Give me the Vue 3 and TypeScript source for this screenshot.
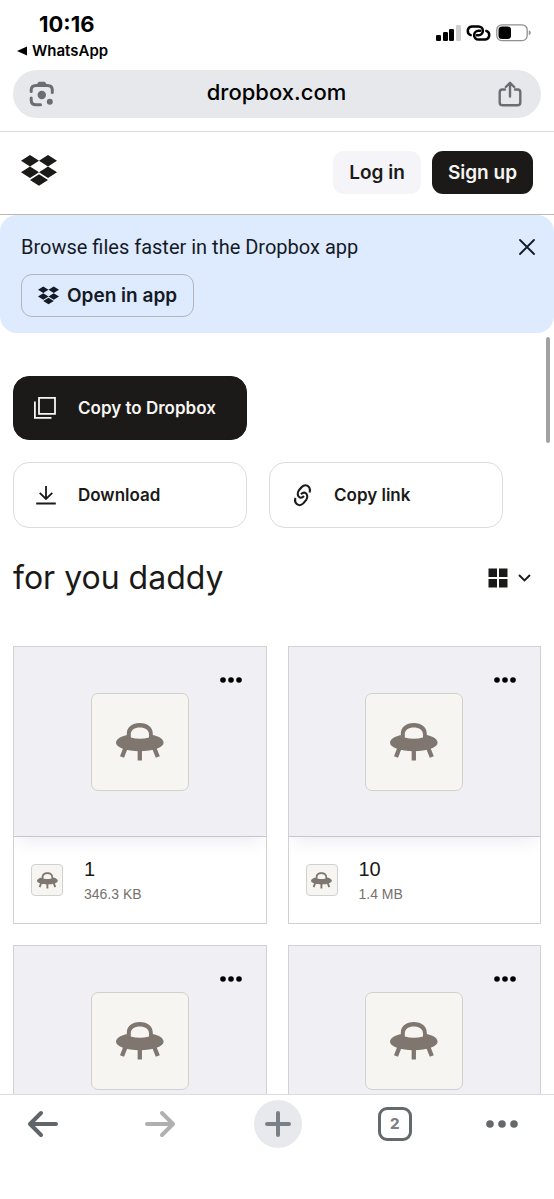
<script setup lang="ts">
interface FileItem {
  id: number
  name?: string
  size?: string
}

const files: FileItem[] = [
  { id: 1, name: '1', size: '346.3 KB' },
  { id: 2, name: '10', size: '1.4 MB' },
  { id: 3 },
  { id: 4 },
]
</script>

<template>
  <div class="screen">
    <svg class="defs" width="0" height="0" aria-hidden="true">
      <symbol id="ufo" viewBox="0 0 48 38">
        <path d="M10.8 15V11C10.8 4 16 0 23.8 0S36.8 4 36.8 11V15L33 15V11.5C33 6.5 29 4.4 23.8 4.4S14.8 6.500 14.800 11.500V14.500Q23.800 17 33 14.500L37 12C44 13.500 47.600 16.500 47.600 19.800C47.600 24.600 37 28.200 23.800 28.200S0 24.600 0 19.800C0 16.500 4 13.500 10.800 12Z" fill="#7f766f" />
        <path d="M9.500 25L6 34M38.200 25L41.800 34M23.800 26V37.500" stroke="#7f766f" stroke-width="4.300" />
      </symbol>
      <symbol id="dropbox" viewBox="0 0 36 31">
        <path d="M9 0l9 5.700-9 5.700-9-5.700zM27 0l9 5.700-9 5.700-9-5.700zM9 11.500l9 5.700-9 5.700-9-5.700zM27 11.500l9 5.700-9 5.700-9-5.700zM18 19.300l9 5.700-9 5.700-9-5.700z" fill="currentColor" />
      </symbol>
      <symbol id="loops" viewBox="0 0 24 15">
        <path d="M4.500 9.500A4.300 4.300 0 0 1 5.500 1.200H12A4.200 4.200 0 0 1 12 9.600H10.500M19.500 5.500A4.300 4.300 0 0 1 18.500 13.800H12A4.200 4.200 0 0 1 12 5.400H13.500" fill="none" stroke="currentColor" stroke-linecap="round" />
      </symbol>
    </svg>

    <div class="status">
      <div class="clock">
        <time>10:16</time>
        <a href="#" class="back-app"><svg width="10" height="10" viewBox="0 0 10 10"><path d="M0 5L10 .5v9z" fill="#000" /></svg>WhatsApp</a>
      </div>
      <div class="indicators">
        <svg width="25" height="16" viewBox="0 0 25 16">
          <rect x="0" y="10" width="5" height="6" rx="1.300" />
          <rect x="7" y="7" width="5" height="9" rx="1.300" />
          <rect x="13" y="4" width="5" height="12" rx="1.300" />
          <rect x="20" y="0" width="5" height="16" rx="1.300" fill="#cfcfcf" />
        </svg>
        <svg width="25" height="16" class="hotspot"><use href="#loops" /></svg>
        <svg width="35" height="18" viewBox="0 0 35 18">
          <rect x=".8" y=".8" width="30.400" height="15.800" rx="5" fill="#fff" stroke="#909090" stroke-width="1.300" />
          <rect x="2.500" y="2.500" width="12.500" height="12.500" rx="3.500" />
          <path d="M32.800 6.200q2 .8 2 2.600t-2 2.600z" fill="#909090" />
        </svg>
      </div>
    </div>

    <div class="address-wrap">
      <div class="address">
        <button class="plain" aria-label="Search with camera">
          <svg width="26" height="26" viewBox="0 0 26 26" fill="none" stroke="#6a6e72" stroke-width="3" stroke-linecap="round">
            <path d="M2.200 10.500V9Q2.200 4.500 7 4.500H18.500Q23.300 4.500 23.300 9V11.500M2.200 17V19Q2.200 23.800 7 23.800H11.500" />
            <path d="M6.800 5L9 1.500Q9.400 .8 10.300 .8H15.200Q16 .8 16.500 1.500L18.700 5z" fill="#6a6e72" stroke="none" />
            <circle cx="12.800" cy="14" r="4.200" fill="#6a6e72" stroke="none" />
            <circle cx="20.800" cy="20.800" r="3" fill="#6a6e72" stroke="none" />
          </svg>
        </button>
        <span class="domain">dropbox.com</span>
        <button class="plain" aria-label="Share">
          <svg width="24" height="26" viewBox="0 0 24 26" fill="none" stroke="#6a6e72" stroke-width="2.400" stroke-linecap="round" stroke-linejoin="round">
            <path d="M7 8.500H4.500Q1.700 8.500 1.700 11.300V21.500Q1.700 24.300 4.500 24.300H19.500Q22.300 24.300 22.300 21.500V11.300Q22.300 8.500 19.500 8.500H17M12 15.500V2.200M7.800 6L12 1.800L16.200 6" />
          </svg>
        </button>
      </div>
    </div>

    <main class="page">
      <header class="site-header">
        <a href="#" class="logo" aria-label="Dropbox"><svg width="36" height="31"><use href="#dropbox" /></svg></a>
        <div class="auth">
          <button class="btn login">Log in</button>
          <button class="btn signup">Sign up</button>
        </div>
      </header>

      <section class="banner">
        <div class="banner-top">
          <p>Browse files faster in the Dropbox app</p>
          <button class="plain" aria-label="Close">
            <svg width="16" height="16" viewBox="0 0 16 16"><path d="M1 1l14 14M15 1L1 15" stroke="#141a26" stroke-width="1.800" stroke-linecap="round" /></svg>
          </button>
        </div>
        <button class="btn open"><svg width="21" height="19"><use href="#dropbox" /></svg>Open in app</button>
      </section>

      <section class="content">
        <div class="actions">
          <button class="action dark">
            <svg width="22" height="22" viewBox="0 0 22 22" fill="none" stroke="#f7f5f2" stroke-width="1.800"><path d="M5 .9H21V16.800H5zM.9 4.500V20.800H17.500" /></svg>
            <span>Copy to Dropbox</span>
          </button>
          <button class="action">
            <svg width="22" height="22" viewBox="0 0 22 22" fill="none" stroke="#1b1a18" stroke-width="1.800"><path d="M12 2V15M5.700 8.800L12 15L18.300 8.800M2.200 19.500H21.800" /></svg>
            <span>Download</span>
          </button>
          <button class="action">
            <svg width="22" height="23" viewBox="0 0 22 23" fill="none" stroke="#1b1a18" stroke-width="2.100"><path d="M19.600 8.500C20.800 5 19 1.200 15.500 1.200C13.500 1.200 12.500 2.200 11.500 3.300L8.800 6.500C7 9 7.400 12.500 10 13.600C11.800 14.200 13 13.200 14 12M5.400 13.900C4.200 17.400 6 21.200 9.500 21.200C11.500 21.200 12.500 20.200 13.500 19.100L16.200 15.900C18 13.400 17.600 9.900 15 8.800C13.200 8.200 12 9.200 11 10.400" /></svg>
            <span>Copy link</span>
          </button>
        </div>

        <div class="title-row">
          <h1>for you daddy</h1>
          <button class="plain view" aria-label="Change view">
            <svg width="20" height="20" viewBox="0 0 20 20" fill="#1b1a18"><path d="M.5.500h8.500v8.500H.5zM11 .500h8.500v8.500H11zM.5 11h8.500v8.500H.5zM11 11h8.500v8.500H11z" /></svg>
            <svg width="13" height="8" viewBox="0 0 13 8"><path d="M1 1l5.500 5.500L12 1" fill="none" stroke="#1b1a18" stroke-width="1.900" /></svg>
          </button>
        </div>

        <div class="grid">
          <article v-for="file in files" :key="file.id" class="card">
            <div class="preview">
              <div class="thumb"><svg width="48" height="38"><use href="#ufo" /></svg></div>
              <button class="plain more" aria-label="More options">
                <svg width="22" height="6" viewBox="0 0 22 6"><circle cx="3" cy="3" r="2.800" /><circle cx="11" cy="3" r="2.800" /><circle cx="19" cy="3" r="2.800" /></svg>
              </button>
            </div>
            <div v-if="file.name" class="info">
              <div class="mini"><svg width="21" height="17"><use href="#ufo" /></svg></div>
              <div>
                <a href="#" class="name">{{ file.name }}</a>
                <div class="size">{{ file.size }}</div>
              </div>
            </div>
          </article>
        </div>
      </section>
      <div class="scroll-thumb"></div>
    </main>

    <nav class="toolbar">
      <button class="tool" aria-label="Back">
        <svg width="32" height="28" viewBox="0 0 32 28"><path d="M29 14H3M14 3L3 14L14 25" /></svg>
      </button>
      <button class="tool forward" aria-label="Forward">
        <svg width="32" height="28" viewBox="0 0 32 28"><path d="M3 14H29M18 3L29 14L18 25" /></svg>
      </button>
      <button class="tool add" aria-label="New tab">
        <svg width="28" height="28" viewBox="0 0 28 28"><path d="M3 14H25M14 3V25" /></svg>
      </button>
      <button class="tool" aria-label="Open tabs"><span class="tabs">2</span></button>
      <button class="tool menu" aria-label="Menu">
        <svg width="32" height="8" viewBox="0 0 32 8"><circle cx="4" cy="4" r="3.800" /><circle cx="16" cy="4" r="3.800" /><circle cx="28" cy="4" r="3.800" /></svg>
      </button>
    </nav>
  </div>
</template>

<style>
body {
  margin: 0;
  background: #fff;
}
</style>

<style scoped>
.screen {
  display: flex;
  flex-direction: column;
  height: 100vh;
  background: #fff;
  color: #1b1a18;
  font-family: Inter, "Liberation Sans", sans-serif;
}
.screen * {
  box-sizing: border-box;
}
svg {
  display: block;
  flex: none;
}
.defs {
  position: absolute;
}
button {
  font: inherit;
  color: inherit;
  cursor: pointer;
}
.plain {
  padding: 0;
  border: 0;
  background: none;
}
.status {
  display: flex;
  justify-content: space-between;
  height: 70px;
  padding: 12px 23px 0 17px;
  color: #000;
}
.clock time {
  display: block;
  padding-left: 22px;
  font-size: 22px;
  line-height: 24px;
  font-weight: 700;
}
.back-app {
  display: flex;
  align-items: center;
  gap: 5px;
  margin-top: 5px;
  font-size: 15px;
  line-height: 20px;
  font-weight: 600;
  color: #000;
  text-decoration: none;
}
.indicators {
  display: flex;
  align-items: center;
  gap: 5px;
  height: 42px;
}
.hotspot {
  stroke-width: 2.400;
}
.address-wrap {
  padding: 0 13px 13px;
  border-bottom: 1px solid #dadbdd;
}
.address {
  display: flex;
  align-items: center;
  justify-content: space-between;
  height: 48px;
  padding: 0 19px 0 16px;
  border-radius: 24px;
  background: #e6e8eb;
}
.domain {
  padding-bottom: 4px;
  font-size: 22px;
  line-height: 28px;
  font-weight: 500;
  color: #000;
}
.page {
  position: relative;
  flex: 1;
  min-height: 0;
  overflow: hidden;
}
.site-header {
  display: flex;
  align-items: center;
  justify-content: space-between;
  height: 83px;
  padding: 0 21px 2px;
  border-bottom: 1px solid #bdb8ae;
}
.logo {
  padding-bottom: 4px;
  color: #1b1a18;
}
.auth {
  display: flex;
  gap: 11px;
}
.btn {
  height: 43px;
  padding: 0 16px;
  border: 0;
  border-radius: 11px;
  font-size: 19px;
  font-weight: 600;
  white-space: nowrap;
}
.login {
  background: #f5f5f9;
}
.signup {
  background: #1b1a18;
  color: #f7f5f2;
}
.banner {
  padding: 20px 19px 16px 21px;
  border-radius: 17px;
  background: #deeafe;
  color: #141a26;
}
.banner-top {
  display: flex;
  align-items: center;
  justify-content: space-between;
}
.banner p {
  margin: 0;
  font-family: Roboto, "Liberation Sans", sans-serif;
  font-size: 20px;
  line-height: 24px;
}
.open {
  display: flex;
  align-items: center;
  gap: 8px;
  margin-top: 15px;
  border: 1px solid #b4b5b8;
  background: transparent;
}
.content {
  padding: 43px 13px 0;
}
.actions {
  display: grid;
  grid-template-columns: 1fr 1fr;
  gap: 22px;
  padding-right: 38px;
}
.action {
  display: flex;
  align-items: center;
  gap: 22px;
  height: 66px;
  padding: 0 20px;
  border: 1px solid #dcdcdc;
  border-radius: 16px;
  background: #fff;
  font-size: 17px;
  font-weight: 600;
  white-space: nowrap;
}
.dark {
  grid-column: 1;
  height: 64px;
  border-color: #1b1a18;
  background: #1b1a18;
  color: #f7f5f2;
}
.dark + .action {
  grid-column: 1;
}
.title-row {
  display: flex;
  align-items: center;
  justify-content: space-between;
  margin-top: 30px;
  padding-right: 10px;
}
h1 {
  margin: 0;
  font-size: 32px;
  line-height: 40px;
  font-weight: 400;
}
.view {
  display: flex;
  align-items: center;
  gap: 10px;
}
.grid {
  display: grid;
  grid-template-columns: 1fr 1fr;
  gap: 21px;
  margin-top: 48px;
}
.card {
  overflow: hidden;
  border: 1px solid #d2d1d5;
}
.preview {
  position: relative;
  display: flex;
  align-items: center;
  justify-content: center;
  height: 190px;
  border-bottom: 1px solid #c6c4cc;
  background: #f0eff4;
  box-shadow: 0 8px 18px -4px #eceaf0;
}
.thumb,
.mini {
  display: flex;
  align-items: center;
  justify-content: center;
  border: 1px solid #d3d1ce;
  background: #f6f5f1;
}
.thumb {
  width: 98px;
  height: 98px;
  border-radius: 7px;
}
.more {
  position: absolute;
  top: 30px;
  right: 24px;
}
.info {
  display: flex;
  align-items: center;
  gap: 21px;
  height: 86px;
  padding: 0 17px;
}
.mini {
  width: 32px;
  height: 32px;
  border-radius: 4px;
}
.name {
  font-family: "Liberation Sans", sans-serif;
  font-size: 20px;
  line-height: 28px;
  color: #1b1a18;
  text-decoration: none;
}
.size {
  font-family: "Liberation Sans", sans-serif;
  font-size: 14px;
  line-height: 22px;
  color: #77716c;
}
.scroll-thumb {
  position: absolute;
  top: 205px;
  right: 4px;
  width: 4px;
  height: 106px;
  border-radius: 2px;
  background: #a2a2a2;
}
.toolbar {
  display: flex;
  justify-content: space-between;
  height: 105px;
  padding: 5px 38px 0 19px;
  border-top: 1px solid #dcdcde;
  background: #fff;
}
.tool {
  display: flex;
  align-items: center;
  justify-content: center;
  width: 48px;
  height: 48px;
  padding: 0;
  border: 0;
  border-radius: 24px;
  background: none;
}
.tool path {
  fill: none;
  stroke: #5f6569;
  stroke-width: 4;
  stroke-linecap: round;
  stroke-linejoin: round;
}
.forward path {
  stroke: #b0b0b0;
}
.add {
  background: #e8e9ed;
}
.add path {
  stroke: #7a8087;
}
.tabs {
  width: 34px;
  height: 34px;
  border: 3px solid #64696c;
  border-radius: 9px;
  font-size: 15px;
  line-height: 28px;
  font-weight: 800;
  color: #7d8184;
}
.menu {
  width: 28px;
}
.menu circle {
  fill: #66696c;
}
</style>
